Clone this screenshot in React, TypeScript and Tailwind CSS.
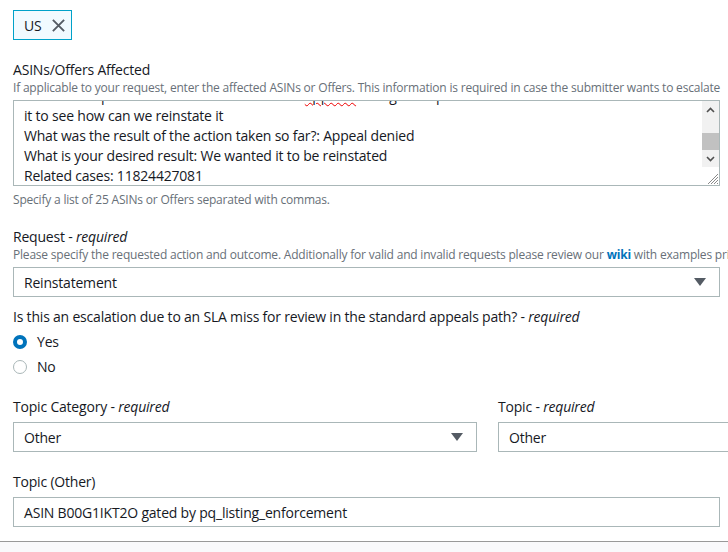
import React from 'react';

const font = { fontFamily: '"Open Sans", "Noto Sans", Arial, sans-serif' };

function Caret({ className }: { className?: string }) {
  return (
    <svg width="14" height="10" viewBox="0 0 14 10" className={className}>
      <path d="M1 1 H13 L7 9 Z" fill="#545b64" />
    </svg>
  );
}

function Label({ text, required }: { text: string; required?: boolean }) {
  return (
    <div className="text-[14px] leading-[20px] text-[#16191f]">
      {text}
      {required && (
        <>
          {' - '}
          <i>required</i>
        </>
      )}
    </div>
  );
}

function Select({ value, className }: { value: string; className?: string }) {
  return (
    <div
      className={`flex h-[30px] items-center justify-between border border-[#aab7b8] bg-white pl-[10px] pr-[12px] text-[14px] text-[#16191f] ${className ?? ''}`}
    >
      <span>{value}</span>
      <Caret />
    </div>
  );
}

function Radio({ label, checked }: { label: string; checked?: boolean }) {
  return (
    <div className="flex h-[25px] items-center gap-[10px] text-[14px] text-[#16191f]">
      {checked ? (
        <span className="box-border h-[14px] w-[14px] rounded-full border-[4px] border-[#0073bb] bg-white" />
      ) : (
        <span className="box-border h-[14px] w-[14px] rounded-full border border-[#aab7b8] bg-white" />
      )}
      <span>{label}</span>
    </div>
  );
}

function ScrollBar() {
  return (
    <div className="flex w-[17px] flex-col bg-[#f1f1f1]">
      <div className="flex h-[17px] items-center justify-center">
        <svg width="9" height="6" viewBox="0 0 9 6">
          <path d="M1 5 L4.5 1.5 L8 5" stroke="#505050" strokeWidth="1.6" fill="none" />
        </svg>
      </div>
      <div className="h-[15px]" />
      <div className="h-[17px] bg-[#c1c1c1]" />
      <div className="flex h-[17px] items-center justify-center">
        <svg width="9" height="6" viewBox="0 0 9 6">
          <path d="M1 1 L4.5 4.5 L8 1" stroke="#505050" strokeWidth="1.6" fill="none" />
        </svg>
      </div>
      <div className="flex flex-1 items-end justify-end bg-white">
        <svg width="14" height="14" viewBox="0 0 14 14">
          <path d="M13 3 L3 13 M13 6 L6 13 M13 9 L9 13 M13 12 L12 13" stroke="#8a8a8a" strokeWidth="1" />
        </svg>
      </div>
    </div>
  );
}

export default function App() {
  const lines = [
    'it to see how can we reinstate it',
    'What was the result of the action taken so far?: Appeal denied',
    'What is your desired result: We wanted it to be reinstated',
    'Related cases: 11824427081',
  ];

  return (
    <div className="flex h-[552px] w-[728px] flex-col overflow-hidden bg-white tracking-[-0.2px]" style={font}>
      <div className="flex flex-1 flex-col pl-[13px] pr-[8px] pt-[10px]">
        {/* marketplace chip */}
        <div className="flex">
          <div className="flex h-[30px] items-center gap-[10px] border border-[#00a1c9] bg-[#f1faff] pl-[10px] pr-[5px] text-[14px] text-[#16191f]">
            <span>US</span>
            <svg width="15" height="15" viewBox="0 0 16 16">
              <path d="M2 2 L14 14 M14 2 L2 14" stroke="#545b64" strokeWidth="2" />
            </svg>
          </div>
        </div>

        <div className="mt-[20px]">
          <Label text="ASINs/Offers Affected" />
          <div className="whitespace-nowrap text-[12px] leading-[16px] text-[#687078]">
            If applicable to your request, enter the affected ASINs or Offers. This information is required in case the submitter wants to escalate
          </div>
        </div>

        <div className="mt-[4px] flex h-[86px] border border-[#aab7b8] bg-white">
          <div className="flex-1 overflow-hidden pl-[10px] text-[14px] leading-[20px] text-[#16191f]">
            <div className="-mt-[15px] whitespace-nowrap">
              <div>
                Previous steps taken: We have reviewed the{' '}
                <span className="underline decoration-wavy decoration-[#e00] decoration-1">appeald</span> listing and opened a ticket on
              </div>
              {lines.map((l) => (
                <div key={l}>{l}</div>
              ))}
            </div>
          </div>
          <ScrollBar />
        </div>

        <div className="mt-[6px] text-[12px] leading-[16px] text-[#687078]">
          Specify a list of 25 ASINs or Offers separated with commas.
        </div>

        <div className="mt-[19px]">
          <Label text="Request" required />
          <div className="whitespace-nowrap text-[12px] leading-[16px] text-[#687078]">
            Please specify the requested action and outcome. Additionally for valid and invalid requests please review our{' '}
            <b className="text-[#0073bb]">wiki</b> with examples prior to submitting
          </div>
        </div>
        <Select value="Reinstatement" className="mt-[4px]" />

        <div className="mt-[10px]">
          <Label text="Is this an escalation due to an SLA miss for review in the standard appeals path?" required />
        </div>
        <div className="mt-[2px] flex flex-col">
          <Radio label="Yes" checked />
          <Radio label="No" />
        </div>

        <div className="mt-[18px] flex gap-[21px]">
          <div className="w-[464px] shrink-0">
            <Label text="Topic Category" required />
            <Select value="Other" className="mt-[5px]" />
          </div>
          <div className="w-[260px] shrink-0">
            <Label text="Topic" required />
            <div className="mt-[5px] flex h-[30px] items-center border border-[#aab7b8] bg-white pl-[10px] text-[14px] text-[#16191f]">
              Other
            </div>
          </div>
        </div>

        <div className="mt-[20px]">
          <Label text="Topic (Other)" />
          <div className="mt-[5px] flex h-[30px] items-center border border-[#aab7b8] bg-white pl-[10px] text-[14px] text-[#16191f]">
            ASIN B00G1IKT2O gated by pq_listing_enforcement
          </div>
        </div>
      </div>

      <div className="h-[11px] border-t border-[#999] bg-[#f9f9fb]" />
    </div>
  );
}
